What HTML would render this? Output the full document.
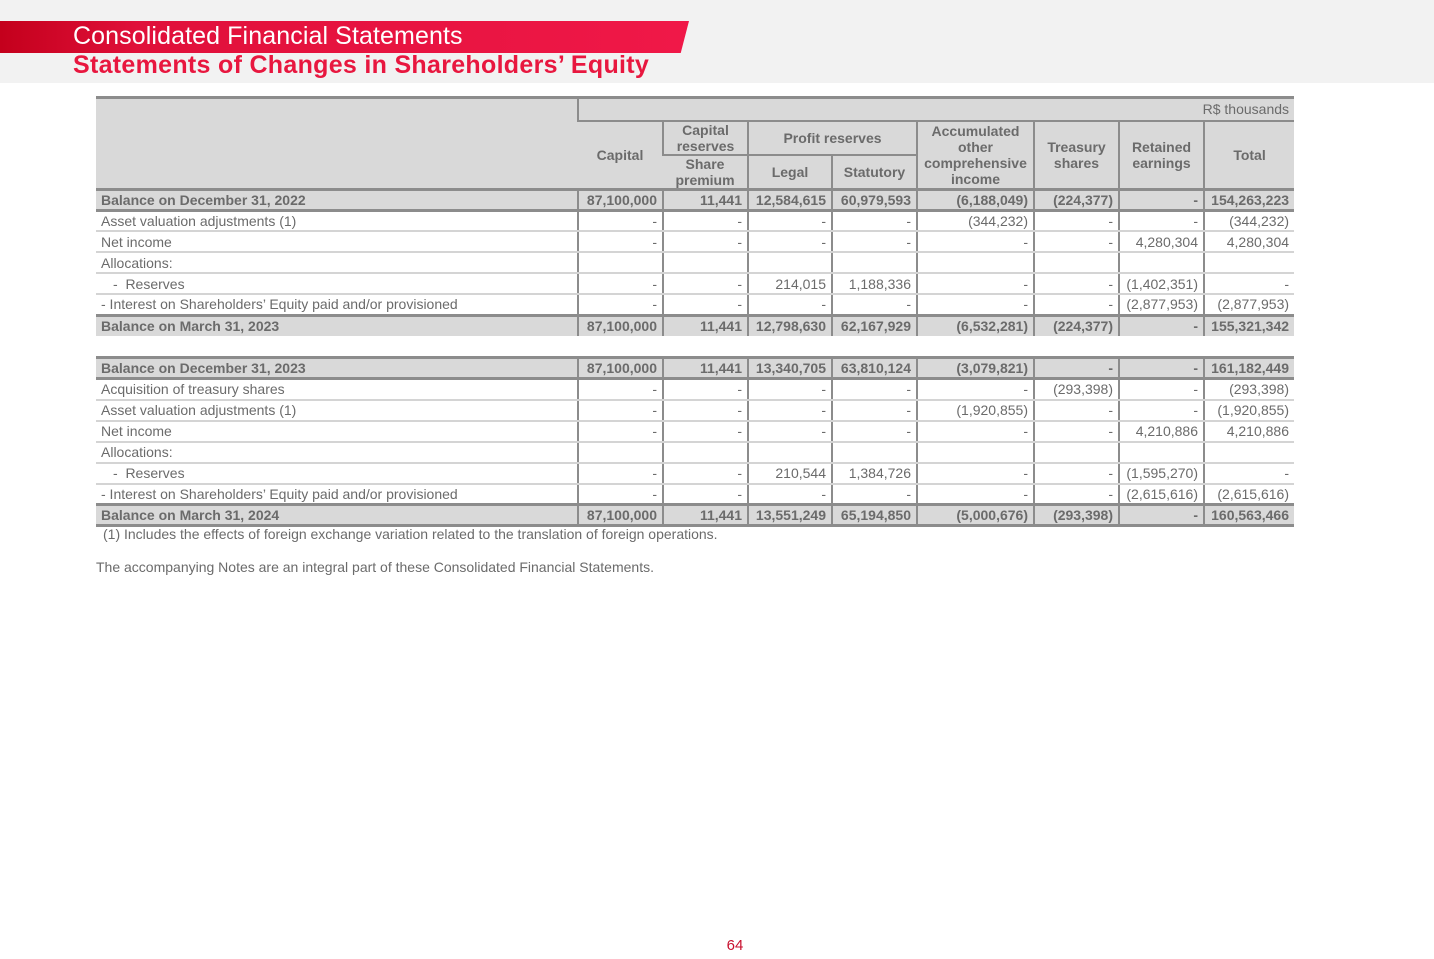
<!DOCTYPE html>
<html><head><meta charset="utf-8"><style>
*{margin:0;padding:0;box-sizing:border-box}
body{width:1434px;height:959px;background:#fff;position:relative;font-family:"Liberation Sans Narrow","Liberation Sans",sans-serif;color:#6b6b6b;overflow:hidden}
.top{position:absolute;left:0;top:0;width:1434px;height:83px;background:#f2f2f2}
.banner{position:absolute;left:0;top:21px;width:689px;height:32px;background:linear-gradient(90deg,#c4001c 0%,#e0103a 20%,#f01848 100%);clip-path:polygon(0 0,100% 0,98.8% 100%,0 100%)}
.t1{position:absolute;left:73px;top:22px;font-family:"Liberation Sans",sans-serif;font-size:25px;color:#fff;letter-spacing:0.1px}
.t2{position:absolute;left:73px;top:51px;font-family:"Liberation Sans",sans-serif;font-size:25px;font-weight:bold;color:#e8173f;letter-spacing:0.3px}
table{position:absolute;left:96px;border-collapse:collapse;table-layout:fixed;width:1198px;font-size:14px}
td{height:21px;padding:0 5px;text-align:right;border-left:2px solid #8c8c8c;border-bottom:2px solid #d4d4d4;white-space:nowrap;line-height:16px;vertical-align:middle}
td:first-child{text-align:left;border-left:none}
tr.b td{background:#d9d9d9;font-weight:bold;border-top:3px solid #8c8c8c;border-bottom:3px solid #8c8c8c}
.h td{background:#d9d9d9;text-align:center;font-weight:bold;border-bottom:2px solid #8c8c8c;line-height:16px}
.in{padding-left:17px}
.note{position:absolute;left:103px;font-size:14px}
</style></head><body>
<div class="top"></div>
<div class="banner"></div>
<div class="t1">Consolidated Financial Statements</div>
<div class="t2">Statements of Changes in Shareholders’ Equity</div>

<table style="top:96px">
<colgroup><col style="width:482px"><col style="width:85px"><col style="width:85px"><col style="width:84px"><col style="width:85px"><col style="width:117px"><col style="width:85px"><col style="width:85px"><col style="width:90px"></colgroup>
<tr class="h"><td rowspan="3" style="border-top:3px solid #8c8c8c;border-bottom:3px solid #8c8c8c"></td><td colspan="8" style="text-align:right;font-weight:normal;border-top:3px solid #8c8c8c;height:23px">R$ thousands</td></tr>
<tr class="h"><td rowspan="2" style="border-bottom:3px solid #8c8c8c">Capital</td><td style="height:34px">Capital<br>reserves</td><td colspan="2">Profit reserves</td><td rowspan="2" style="border-bottom:3px solid #8c8c8c">Accumulated<br>other<br>comprehensive<br>income</td><td rowspan="2" style="border-bottom:3px solid #8c8c8c">Treasury<br>shares</td><td rowspan="2" style="border-bottom:3px solid #8c8c8c">Retained<br>earnings</td><td rowspan="2" style="border-bottom:3px solid #8c8c8c">Total</td></tr>
<tr class="h"><td style="height:34px;border-bottom:3px solid #8c8c8c">Share<br>premium</td><td style="border-bottom:3px solid #8c8c8c">Legal</td><td style="border-bottom:3px solid #8c8c8c">Statutory</td></tr>
<tr class="b"><td>Balance on December 31, 2022</td><td>87,100,000</td><td>11,441</td><td>12,584,615</td><td>60,979,593</td><td>(6,188,049)</td><td>(224,377)</td><td>-</td><td>154,263,223</td></tr>
<tr><td>Asset valuation adjustments (1)</td><td>-</td><td>-</td><td>-</td><td>-</td><td>(344,232)</td><td>-</td><td>-</td><td>(344,232)</td></tr>
<tr><td>Net income</td><td>-</td><td>-</td><td>-</td><td>-</td><td>-</td><td>-</td><td>4,280,304</td><td>4,280,304</td></tr>
<tr><td>Allocations:</td><td></td><td></td><td></td><td></td><td></td><td></td><td></td><td></td></tr>
<tr><td class="in">-&nbsp; Reserves</td><td>-</td><td>-</td><td>214,015</td><td>1,188,336</td><td>-</td><td>-</td><td>(1,402,351)</td><td>-</td></tr>
<tr><td>- Interest on Shareholders’ Equity paid and/or provisioned</td><td>-</td><td>-</td><td>-</td><td>-</td><td>-</td><td>-</td><td>(2,877,953)</td><td>(2,877,953)</td></tr>
<tr class="b"><td style="border-bottom:none">Balance on March 31, 2023</td><td style="border-bottom:none">87,100,000</td><td style="border-bottom:none">11,441</td><td style="border-bottom:none">12,798,630</td><td style="border-bottom:none">62,167,929</td><td style="border-bottom:none">(6,532,281)</td><td style="border-bottom:none">(224,377)</td><td style="border-bottom:none">-</td><td style="border-bottom:none">155,321,342</td></tr>
</table>

<table style="top:356px">
<colgroup><col style="width:482px"><col style="width:85px"><col style="width:85px"><col style="width:84px"><col style="width:85px"><col style="width:117px"><col style="width:85px"><col style="width:85px"><col style="width:90px"></colgroup>
<tr class="b"><td>Balance on December 31, 2023</td><td>87,100,000</td><td>11,441</td><td>13,340,705</td><td>63,810,124</td><td>(3,079,821)</td><td>-</td><td>-</td><td>161,182,449</td></tr>
<tr><td>Acquisition of treasury shares</td><td>-</td><td>-</td><td>-</td><td>-</td><td>-</td><td>(293,398)</td><td>-</td><td>(293,398)</td></tr>
<tr><td>Asset valuation adjustments (1)</td><td>-</td><td>-</td><td>-</td><td>-</td><td>(1,920,855)</td><td>-</td><td>-</td><td>(1,920,855)</td></tr>
<tr><td>Net income</td><td>-</td><td>-</td><td>-</td><td>-</td><td>-</td><td>-</td><td>4,210,886</td><td>4,210,886</td></tr>
<tr><td>Allocations:</td><td></td><td></td><td></td><td></td><td></td><td></td><td></td><td></td></tr>
<tr><td class="in">-&nbsp; Reserves</td><td>-</td><td>-</td><td>210,544</td><td>1,384,726</td><td>-</td><td>-</td><td>(1,595,270)</td><td>-</td></tr>
<tr><td>- Interest on Shareholders’ Equity paid and/or provisioned</td><td>-</td><td>-</td><td>-</td><td>-</td><td>-</td><td>-</td><td>(2,615,616)</td><td>(2,615,616)</td></tr>
<tr class="b"><td>Balance on March 31, 2024</td><td>87,100,000</td><td>11,441</td><td>13,551,249</td><td>65,194,850</td><td>(5,000,676)</td><td>(293,398)</td><td>-</td><td>160,563,466</td></tr>
</table>

<div class="note" style="top:526px">(1) Includes the effects of foreign exchange variation related to the translation of foreign operations.</div>
<div class="note" style="top:559px;left:96px">The accompanying Notes are an integral part of these Consolidated Financial Statements.</div>
<div style="position:absolute;left:0;width:1434px;top:937px;text-align:center;color:#c8102e;font-size:15px;font-family:'Liberation Sans',sans-serif;padding-left:36px">64</div>
</body></html>
